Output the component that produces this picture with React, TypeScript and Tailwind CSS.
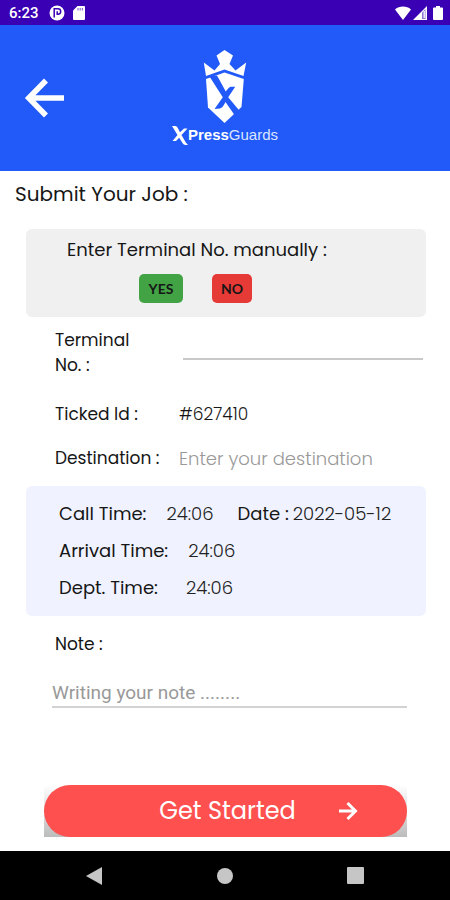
import React from "react";

function StatusBar() {
  return (
    <div className="flex h-[25px] items-center bg-[#3a00b3] pr-[7px] pl-[9px] text-white">
      <span className="w-[29px] font-[Roboto,sans-serif] text-[15px] leading-6 font-medium">6:23</span>
      <svg className="ml-[11px] h-4 w-4" viewBox="0 0 16 16" aria-hidden="true">
        <circle cx="8" cy="8" r="7.5" fill="#fff" />
        <path d="M5.200 3v9.500M5.200 3.800h3.800a2.700 2.700 0 0 1 0 5.400H8.200V6.200" fill="none" stroke="#3a00b3" strokeWidth="1.500" />
      </svg>
      <svg className="ml-2 h-4 w-3" viewBox="0 0 12 16" aria-hidden="true">
        <path d="M4.5 1H11a1 1 0 0 1 1 1v12a1 1 0 0 1-1 1H1a1 1 0 0 1-1-1V5.5z" fill="#fff" />
        <path d="M5 3v2.4M7.2 3v2.4M9.4 3v2.4" stroke="#8f73d8" strokeWidth="1.2" />
      </svg>
      <svg className="ml-auto h-4 w-4" viewBox="0 0 16 16" aria-hidden="true">
        <path d="M8 15 0 4.4C4.500 .6 11.500 .6 16 4.400z" fill="#fff" />
      </svg>
      <svg className="ml-0.5 h-4 w-[14px]" viewBox="0 0 14 16" aria-hidden="true">
        <path d="M0 15 14 1v14z" fill="#fff" />
        <path d="M9 7.500 12.500 4v10H9z" fill="#8f73d8" />
        <path d="M11.200 6v7" stroke="#fff" strokeWidth="1.200" />
      </svg>
      <svg className="ml-1.5 h-4 w-[10px]" viewBox="0 0 10 16" aria-hidden="true">
        <path d="M3 1h4v1.500h2a1 1 0 0 1 1 1V14a1 1 0 0 1-1 1H1a1 1 0 0 1-1-1V3.500a1 1 0 0 1 1-1h2z" fill="#fff" />
      </svg>
    </div>
  );
}

function Header() {
  return (
    <header className="grid h-[146px] grid-cols-[1fr_auto_1fr] bg-[#215af8] text-white">
      <button type="button" aria-label="Back" className="ml-6 self-center justify-self-start">
        <svg className="h-10 w-10" viewBox="0 0 40 40" fill="none" stroke="#fff" strokeWidth="5.600" aria-hidden="true">
          <path d="M40 20H6M22 2.500 4.800 20 22 37.500" />
        </svg>
      </button>
      <div className="flex flex-col items-center pt-[25px]">
        <svg className="h-[73px] w-[44px]" viewBox="0 0 44 73" aria-hidden="true">
          <path
            d="M21.500 0 30 5.500 26.500 14 32.500 20.500 43.200 12.500 40.500 26 21.500 19.500 3 26 .8 12.500 11.500 20.500 17 14 13.500 5.500z"
            fill="#fff"
          />
          <path d="M21.500 22.500 40.800 29 38.500 57 21.500 73 5 57.500 3 29z" fill="#fff" />
          <path
            d="M6.500 26.500 14 25.500 22.800 41.500Q26 37 28 36.800L32.200 36.700 25.200 47.300 36.500 60.700 31.500 65 22.500 52Q20 57.500 17 58.500L11.500 59 19.800 47.300z"
            fill="#215af8"
          />
        </svg>
        <div className="flex items-center font-['Liberation_Sans',sans-serif] text-[15px] leading-6">
          <svg className="h-[19px] w-4" viewBox="0 0 16 19" aria-hidden="true">
            <path d="M0 0h3.500q1.300 0 2 1.600L8 6.200 12 2.500h3.500L9.500 9l4.300 7.500L16 19h-2.500q-2 0-3-2L7.200 11.700 4 15H.5l5-6z" fill="#fff" />
          </svg>
          <span className="font-bold">Press</span>
          <span className="text-[#dbe5ff]">Guards</span>
        </div>
      </div>
    </header>
  );
}

function TimeEntry({ label, value, gap }: { label: string; value: string; gap: string }) {
  return (
    <div className={`flex ${gap}`}>
      <dt>{label}</dt>
      <dd className="font-light text-[#222]">{value}</dd>
    </div>
  );
}

function NavigationBar() {
  return (
    <nav aria-label="System" className="grid h-[49px] grid-cols-[1fr_auto_1fr] items-center bg-black">
      <button type="button" aria-label="Back" className="ml-[86px] justify-self-start">
        <svg className="h-[18px] w-4" viewBox="0 0 16 18" aria-hidden="true">
          <path d="M16 0v18L0 9z" fill="#c6c6c6" />
        </svg>
      </button>
      <button type="button" aria-label="Home" className="h-4 w-4 rounded-full bg-[#c6c6c6]" />
      <button type="button" aria-label="Recent apps" className="mr-[86px] h-[17px] w-[17px] justify-self-end rounded-[1px] bg-[#c6c6c6]" />
    </nav>
  );
}

export default function App() {
  return (
    <div className="flex min-h-screen flex-col bg-white font-[Poppins,Inter,sans-serif] text-[17px] leading-[25px] text-[#161616]">
      <StatusBar />
      <Header />
      <main className="flex flex-1 flex-col pt-2">
        <h1 className="ml-[15px] text-xl leading-[30px]">Submit Your Job :</h1>

        <fieldset className="mt-5 mr-6 ml-[26px] rounded-md bg-[#f0f0f0] pt-2 pb-[14px]">
          <p className="pl-[41px] text-[18px]">Enter Terminal No. manually :</p>
          <div className="mt-3 flex gap-[29px] pl-[113px] font-[Lato,sans-serif] text-sm font-bold">
            <button type="button" className="h-[29px] w-11 rounded-[5px] bg-[#42a345]">YES</button>
            <button type="button" className="h-[29px] w-10 rounded-[5px] bg-[#e63a36]">NO</button>
          </div>
        </fieldset>

        <div className="mt-[11px] mr-[27px] ml-[55px] grid grid-cols-[124px_1fr]">
          <label htmlFor="terminal" className="w-[90px]">Terminal No. :</label>
          <input id="terminal" className="ml-1 h-8 min-w-0 border-b-2 border-[#c8c8c8] outline-none" />
          <span className="mt-6">Ticked Id :</span>
          <span className="mt-6 font-light">#627410</span>
          <label htmlFor="destination" className="mt-[19px]">Destination :</label>
          <input
            id="destination"
            placeholder="Enter your destination"
            className="mt-[19px] h-6 min-w-0 text-[18px] font-light outline-none placeholder:text-[#999]"
          />
        </div>

        <dl className="mt-[15px] mr-6 ml-[26px] flex flex-col gap-3 rounded-md bg-[#f0f3ff] pt-[15px] pb-4 pl-[33px] text-[18px]">
          <div className="flex gap-6">
            <TimeEntry label="Call Time:" value="24:06" gap="gap-5" />
            <TimeEntry label="Date :" value="2022-05-12" gap="gap-1" />
          </div>
          <TimeEntry label="Arrival Time:" value="24:06" gap="gap-5" />
          <TimeEntry label="Dept. Time:" value="24:06" gap="gap-7" />
        </dl>

        <label htmlFor="note" className="mt-4 ml-[55px] self-start">Note :</label>
        <input
          id="note"
          placeholder="Writing your note ........"
          className="mt-[21px] mr-[43px] ml-[52px] h-[30px] border-b-2 border-[#d2d2d2] font-[Roboto,sans-serif] text-[19px] outline-none placeholder:text-[#999]"
        />

        <div className="mt-auto mr-[43px] mb-[14px] ml-[44px] bg-linear-to-b from-white to-[#bcbcbc]">
          <button
            type="button"
            className="grid h-[52px] w-full grid-cols-[1fr_auto_1fr] items-center rounded-full bg-[#ff5050] pl-1 text-2xl text-white"
          >
            <span className="col-start-2">Get Started</span>
            <svg className="mr-[49px] h-5 w-5 justify-self-end" viewBox="0 0 20 20" fill="none" stroke="#fff" strokeWidth="3" aria-hidden="true">
              <path d="M1 10h16M9.500 2 17.500 10l-8 8" />
            </svg>
          </button>
        </div>
      </main>
      <NavigationBar />
    </div>
  );
}
